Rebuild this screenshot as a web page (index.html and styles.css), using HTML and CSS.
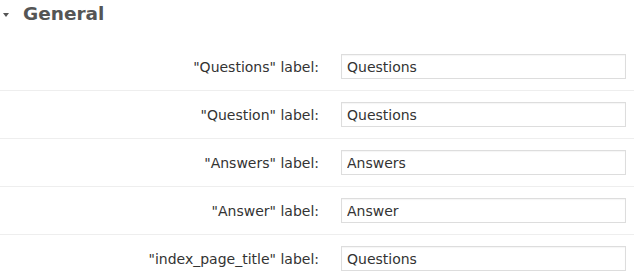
FILE: index.html
```html
<!DOCTYPE html>
<html lang="en">
<head>
    <meta charset="UTF-8">
    <meta name="viewport" content="width=device-width, initial-scale=1.0">
    <title>General settings</title>
    <link rel="stylesheet" href="styles.css">
</head>
<body>
    <div class="section">
        <h2 class="section-title"><span class="toggle"></span>General</h2>

        <div class="field-row">
            <label class="field-label" for="questionsLabel">"Questions" label:</label>
            <input class="field-input" id="questionsLabel" type="text" value="Questions">
        </div>
        <div class="field-row">
            <label class="field-label" for="questionLabel">"Question" label:</label>
            <input class="field-input" id="questionLabel" type="text" value="Questions">
        </div>
        <div class="field-row">
            <label class="field-label" for="answersLabel">"Answers" label:</label>
            <input class="field-input" id="answersLabel" type="text" value="Answers">
        </div>
        <div class="field-row">
            <label class="field-label" for="answerLabel">"Answer" label:</label>
            <input class="field-input" id="answerLabel" type="text" value="Answer">
        </div>
        <div class="field-row last">
            <label class="field-label" for="indexTitleLabel">"index_page_title" label:</label>
            <input class="field-input" id="indexTitleLabel" type="text" value="Questions">
        </div>
    </div>
</body>
</html>
```

FILE: styles.css
```css
body {
    margin: 0;
    background-color: #fff;
    font-family: 'DejaVu Sans', Verdana, sans-serif;
    color: #333;
}

.section-title {
    margin: 0;
    height: 43px;
    display: flex;
    align-items: flex-start;
    padding-top: 2px;
    box-sizing: border-box;
    font-size: 18.5px;
    font-weight: bold;
    color: #555;
    line-height: 24px;
}

/* collapse arrow */
.toggle {
    width: 0;
    height: 0;
    margin: 11px 14px 0 3px;
    border-left: 3px solid transparent;
    border-right: 3px solid transparent;
    border-top: 4px solid #555;
}

.field-row {
    display: grid;
    grid-template-columns: 1fr 285px;
    column-gap: 22px;
    align-items: center;
    padding: 11px 8px 11px 0;
    border-bottom: 1px solid #eee;
}

.field-row.last {
    border-bottom: none;
}

.field-label {
    text-align: right;
    font-size: 14px;
    color: #333;
}

.field-input {
    height: 25px;
    box-sizing: border-box;
    margin: 0;
    padding: 1px 5px 0;
    border: 1px solid #ddd;
    box-shadow: inset 0 1px 1px rgba(0, 0, 0, 0.04);
    font-family: 'DejaVu Sans', Verdana, sans-serif;
    font-size: 14px;
    color: #333;
    background-color: #fff;
}
```
